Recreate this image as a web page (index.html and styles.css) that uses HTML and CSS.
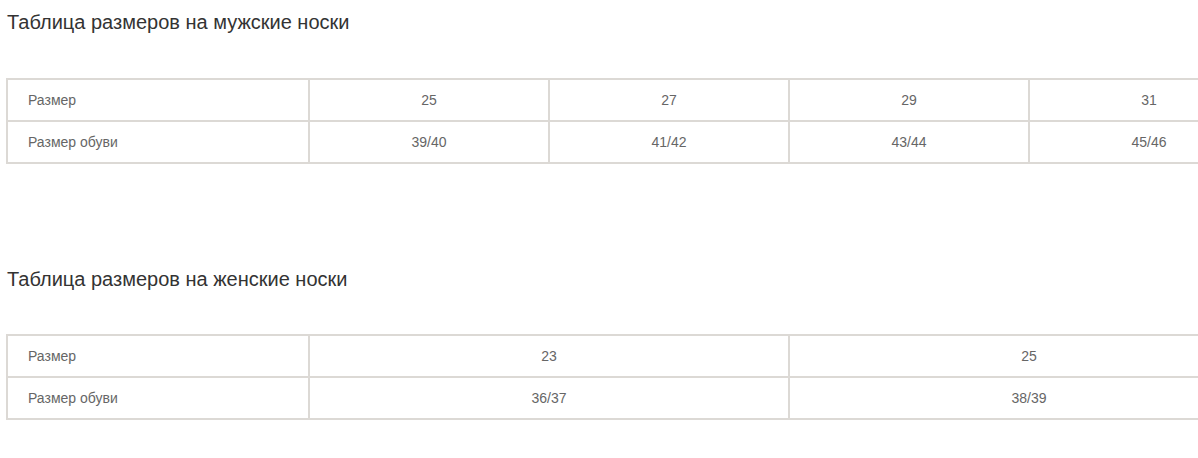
FILE: index.html
```html
<!DOCTYPE html>
<html lang="ru">
<head>
<meta charset="utf-8">
<link rel="stylesheet" href="styles.css">
</head>
<body>
<div class="page">
  <section class="block">
    <h2 class="title">Таблица размеров на мужские носки</h2>
    <table class="sizes">
      <colgroup><col class="c-label"><col class="c4"><col class="c4"><col class="c4"><col class="c4"></colgroup>
      <tr><td>Размер</td><td>25</td><td>27</td><td>29</td><td>31</td></tr>
      <tr><td>Размер обуви</td><td>39/40</td><td>41/42</td><td>43/44</td><td>45/46</td></tr>
    </table>
  </section>
  <section class="block block-second">
    <h2 class="title">Таблица размеров на женские носки</h2>
    <table class="sizes">
      <colgroup><col class="c-label"><col class="c2"><col class="c2"></colgroup>
      <tr><td>Размер</td><td>23</td><td>25</td></tr>
      <tr><td>Размер обуви</td><td>36/37</td><td>38/39</td></tr>
    </table>
  </section>
</div>
</body>
</html>
```
FILE: styles.css
```css
html, body {
  margin: 0;
  padding: 0;
  background: #fff;
  overflow: hidden;
}
.page {
  padding: 11px 0 0 6px;
  font-family: "Liberation Sans", Arial, sans-serif;
}
.block {
  height: 256px;
}
.title {
  margin: 0 0 0 1px;
  font-size: 20px;
  font-weight: normal;
  line-height: 23px;
  color: #333;
}
.sizes {
  margin-top: 44px;
  border-collapse: collapse;
  table-layout: fixed;
  width: 1262px;
  font-size: 14px;
  color: #666;
}
.block-second .title {
  margin-top: 1px;
}
.block-second .sizes {
  margin-top: 43px;
}
.sizes td {
  border: 2px solid #dcd9d5;
  height: 40px;
  padding: 0;
  text-align: center;
  box-sizing: content-box;
}
.sizes td:first-child {
  text-align: left;
  padding-left: 20px;
}
.c-label { width: 302px; }
.c4 { width: 240px; }
.c2 { width: 480px; }
```
